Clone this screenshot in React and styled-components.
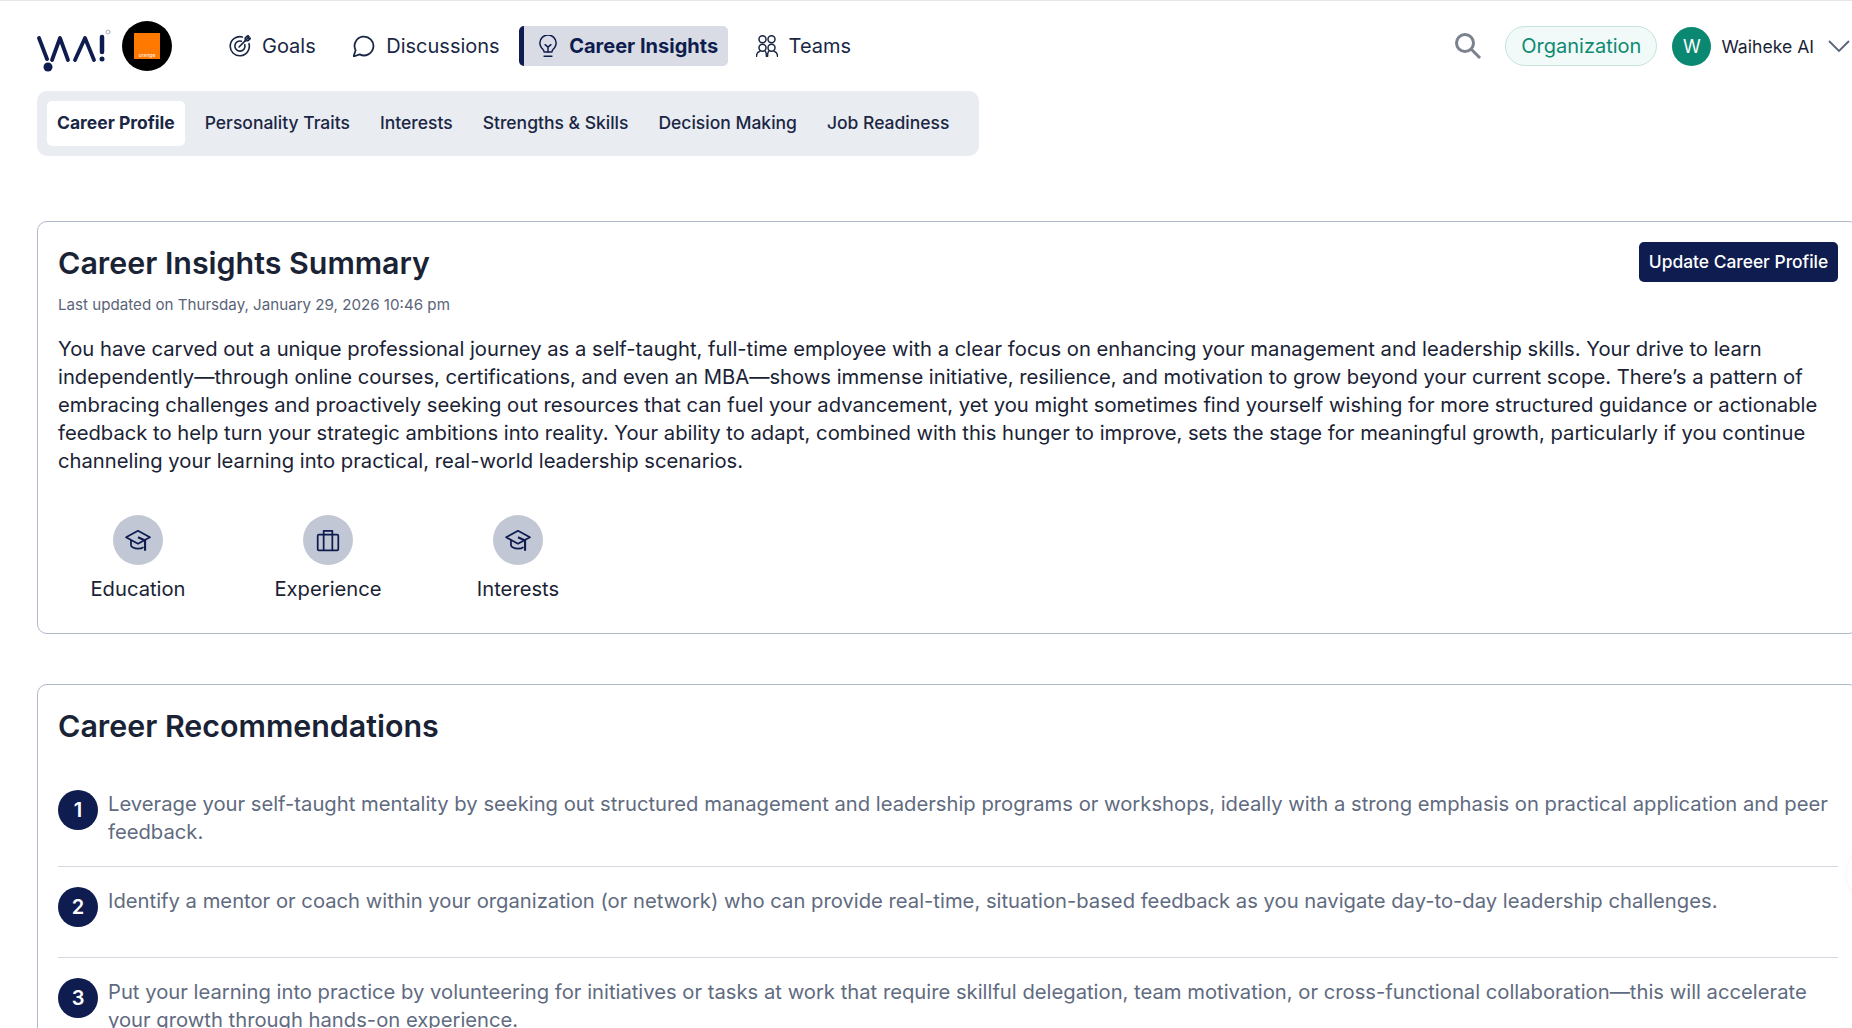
import React from 'react';
import styled, { createGlobalStyle } from 'styled-components';

const navy = '#0e1c4f';

const GlobalStyle = createGlobalStyle`
  html, body {
    margin: 0;
    padding: 0;
    height: 100%;
    overflow: hidden;
    background: #fff;
  }
  body {
    font-family: Inter, "Noto Sans", sans-serif;
    color: #1a2335;
  }
`;

const Page = styled.div`
  width: 1852px;
  height: 1028px;
  overflow: hidden;
  position: relative;
  border-top: 1px solid #e5e7eb;
  box-sizing: border-box;
`;

const Header = styled.header`
  display: flex;
  align-items: center;
  height: 90px;
  padding: 0 2px 0 37px;
  box-sizing: border-box;
`;

const LogoMark = styled.svg`
  width: 78px;
  height: 52px;
  flex-shrink: 0;
`;

const OrangeBadge = styled.div`
  width: 50px;
  height: 50px;
  margin-left: 7px;
  border-radius: 50%;
  background: #000;
  display: flex;
  align-items: center;
  justify-content: center;
  flex-shrink: 0;
`;

const OrangeSquare = styled.div`
  width: 26px;
  height: 26px;
  background: #ff7900;
  display: flex;
  align-items: flex-end;
  justify-content: center;
  font-size: 5px;
  line-height: 8px;
  color: #fff;
`;

const Nav = styled.nav`
  display: flex;
  align-items: center;
  gap: 9.5px;
  margin-left: 39px;
`;

const NavItem = styled.a`
  display: flex;
  align-items: center;
  gap: ${p => (p.$active ? 10 : 11)}px;
  height: 40px;
  padding: 0 10px 0 13px;
  border-left: 5px solid ${p => (p.$active ? navy : 'transparent')};
  border-radius: 5px;
  background: ${p => (p.$active ? '#d9dce4' : 'transparent')};
  color: ${p => (p.$active ? navy : '#1a2744')};
  font-size: 20px;
  font-weight: ${p => (p.$active ? 700 : 400)};
  white-space: nowrap;
  svg {
    width: 22px;
    height: 22px;
    flex-shrink: 0;
  }
`;

const HeaderRight = styled.div`
  display: flex;
  align-items: center;
  margin-left: auto;
`;

const SearchIcon = styled.svg`
  width: 28px;
  height: 28px;
  margin-right: 23px;
`;

const OrgPill = styled.div`
  display: flex;
  align-items: center;
  height: 40px;
  padding: 0 15px;
  box-sizing: border-box;
  border: 1px solid #c4e4dc;
  border-radius: 20px;
  background: #f1faf8;
  color: #0d8a72;
  font-size: 20px;
`;

const Avatar = styled.div`
  width: 39px;
  height: 39px;
  margin-left: 15px;
  border-radius: 50%;
  background: #0b8871;
  color: #fff;
  font-size: 18px;
  display: flex;
  align-items: center;
  justify-content: center;
`;

const UserName = styled.span`
  margin-left: 10px;
  font-size: 17.6px;
  color: #1a2335;
`;

const Chevron = styled.svg`
  width: 22px;
  height: 14px;
  margin-left: 14px;
`;

const TabBar = styled.div`
  display: flex;
  width: max-content;
  gap: 10px;
  margin-left: 37px;
  padding: 10px 20px 10px 10px;
  background: #e9ecf1;
  border-radius: 10px;
`;

const Tab = styled.div`
  height: 45px;
  padding: 0 10px 2px;
  box-sizing: border-box;
  display: flex;
  align-items: center;
  border-radius: 5px;
  background: ${p => (p.$active ? '#fff' : 'transparent')};
  color: #1a2744;
  font-size: 17.5px;
  font-weight: ${p => (p.$active ? 700 : 500)};
  white-space: nowrap;
`;

const Card = styled.section`
  width: 1822px;
  margin: ${p => p.$top}px 0 0 37px;
  padding: 20px 20px 0;
  box-sizing: border-box;
  height: ${p => p.$height}px;
  background: #fff;
  border: 1px solid #b0b9c9;
  border-radius: 10px;
`;

const CardHead = styled.div`
  display: flex;
  justify-content: space-between;
  align-items: flex-start;
`;

const Title = styled.h2`
  margin: 0;
  font-size: 30.4px;
  line-height: 42px;
  font-weight: 600;
  color: #1a2335;
`;

const UpdateButton = styled.button`
  height: 40px;
  width: 199px;
  border: none;
  border-radius: 5px;
  background: ${navy};
  color: #fff;
  font-family: inherit;
  font-size: 17.4px;
  font-weight: 500;
  white-space: nowrap;
  padding: 0 0 1px;
`;

const Updated = styled.div`
  margin-top: 10px;
  font-size: 15.15px;
  line-height: 22px;
  color: #5a6478;
`;

const Summary = styled.p`
  margin: 19px 0 0;
  font-size: 20.23px;
  line-height: 28px;
  color: #1a2335;
`;

const Highlights = styled.div`
  display: flex;
  margin: 40px 0 0 -15px;
`;

const Highlight = styled.div`
  width: 190px;
  display: flex;
  flex-direction: column;
  align-items: center;
  font-size: 20.2px;
  line-height: 28px;
  color: #1a2335;
`;

const HighlightIcon = styled.div`
  width: 50px;
  height: 50px;
  margin-bottom: 10px;
  border-radius: 50%;
  background: #c1c7d4;
  color: ${navy};
  display: flex;
  align-items: center;
  justify-content: center;
  svg {
    width: 26px;
    height: 26px;
  }
`;

const RecList = styled.div`
  margin-top: 43px;
`;

const RecItem = styled.div`
  display: flex;
  padding: ${p => (p.$first ? 0 : 20)}px 0 20px;
  border-bottom: ${p => (p.$last ? 'none' : '1px solid #d5d8e0')};
`;

const RecRow = styled.div`
  display: flex;
  gap: 10px;
  min-height: 50px;
`;

const RecNumber = styled.div`
  width: 40px;
  height: 40px;
  flex-shrink: 0;
  border-radius: 50%;
  background: ${navy};
  color: #fff;
  font-size: 20px;
  font-weight: 600;
  display: flex;
  align-items: center;
  justify-content: center;
`;

const RecText = styled.div`
  font-size: 20.23px;
  line-height: 28px;
  color: #5f6b80;
`;

const EdgeButton = styled.div`
  position: absolute;
  left: 1847px;
  top: 843px;
  width: 60px;
  height: 60px;
  border-radius: 50%;
  background: #fff;
  box-shadow: 0 0 4px rgba(30, 40, 70, 0.07);
`;

const iconProps = {
  viewBox: '0 0 24 24',
  fill: 'none',
  stroke: 'currentColor',
  strokeWidth: 1.7,
  strokeLinecap: 'round',
  strokeLinejoin: 'round',
};

const GoalIcon = () => (
  <svg {...iconProps} viewBox="0.5 0.5 23 23">
    <path d="M21.4 9.6A10 10 0 1 1 14.4 2.6" />
    <path d="M17 10.6A5.300 5.300 0 1 1 13.400 7" />
    <path d="M11 13 21.500 2.500" />
    <path d="M17.500 3.500v3h3l2.500-2.500h-2.500V1z" />
  </svg>
);

const BubbleIcon = () => (
  <svg {...iconProps} viewBox="1.5 1.5 21 21">
    <path d="M7.900 20A9 9 0 1 0 4 16.100L2 22Z" />
  </svg>
);

const BulbIcon = () => (
  <svg {...iconProps} viewBox="1 0.600 22 22.500" strokeWidth={1.5}>
    <path d="M8 18c0-2-1.500-3-2.500-4a8.300 8.300 0 1 1 13 0c-1 1-2.500 2-2.500 4z" />
    <path d="M9 10.500l3 2.500 3-2.500M12 13v5" />
    <path d="M8 22.300h8" />
  </svg>
);

const TeamIcon = () => (
  <svg {...iconProps} viewBox="1 1.200 22 22" strokeWidth={1.5}>
    <circle cx="7.500" cy="5.500" r="3.500" />
    <circle cx="16.500" cy="5.500" r="3.500" />
    <circle cx="7.500" cy="14" r="3.500" />
    <circle cx="16.500" cy="14" r="3.500" />
    <path d="M1.500 22.500c0-2.500 1.300-4.300 3.300-5M10.200 17.500c1 .6 1.200 2.700 1.200 5M22.500 22.500c0-2.500-1.300-4.300-3.300-5M13.800 17.500c-1 .6-1.200 2.700-1.200 5" />
  </svg>
);

const CapIcon = () => (
  <svg {...iconProps} strokeWidth={1.6} strokeLinecap="butt">
    <path d="M12 3.500 23 9.500 12 15.500 1 9.500z" />
    <path d="M5.500 12v4.500c0 2 3 3.500 6.500 3.500 2 0 4-.5 5-1.500" />
    <path d="M12 9.500 18.500 12.500V22" strokeWidth={2} />
  </svg>
);

const CaseIcon = () => (
  <svg {...iconProps} strokeWidth={1.6} strokeLinecap="butt">
    <rect x="2.500" y="7" width="19" height="14.500" rx="1" />
    <path d="M8 7v14.500M16 7v14.500" />
    <path d="M8 7V3.500h8V7" />
  </svg>
);

const Logo = () => (
  <LogoMark viewBox="0 0 78 52" fill="none" stroke={navy} strokeWidth="3.800" strokeLinecap="round" strokeLinejoin="round">
    <path d="M2 18 10 39" />
    <path d="M15 40 23 18 31 40" />
    <path d="M38 40 48 18 57 40" />
    <path d="M65 17 65 32" strokeWidth="4.500" />
    <circle cx="65" cy="39" r="2.500" fill={navy} stroke="none" />
    <circle cx="11" cy="47" r="4.500" fill={navy} stroke="none" />
    <circle cx="71" cy="12" r="2" stroke="#a9b0bd" strokeWidth="1" />
  </LogoMark>
);

const tabs = ['Career Profile', 'Personality Traits', 'Interests', 'Strengths & Skills', 'Decision Making', 'Job Readiness'];

const recommendations = [
  'Leverage your self-taught mentality by seeking out structured management and leadership programs or workshops, ideally with a strong emphasis on practical application and peer feedback.',
  'Identify a mentor or coach within your organization (or network) who can provide real-time, situation-based feedback as you navigate day-to-day leadership challenges.',
  'Put your learning into practice by volunteering for initiatives or tasks at work that require skillful delegation, team motivation, or cross-functional collaboration—this will accelerate your growth through hands-on experience.',
];

export default function App() {
  return (
    <Page>
      <GlobalStyle />
      <Header>
        <Logo />
        <OrangeBadge>
          <OrangeSquare>orange</OrangeSquare>
        </OrangeBadge>
        <Nav>
          <NavItem><GoalIcon />Goals</NavItem>
          <NavItem><BubbleIcon />Discussions</NavItem>
          <NavItem $active><BulbIcon />Career Insights</NavItem>
          <NavItem><TeamIcon />Teams</NavItem>
        </Nav>
        <HeaderRight>
          <SearchIcon viewBox="0 0 28 28" fill="none" stroke="#7b818f" strokeWidth="3">
            <circle cx="11" cy="11" r="8.500" />
            <path d="M17 17l9 9" />
          </SearchIcon>
          <OrgPill>Organization</OrgPill>
          <Avatar>W</Avatar>
          <UserName>Waiheke AI</UserName>
          <Chevron viewBox="0 0 22 14" fill="none" stroke="#5a6478" strokeWidth="1.800">
            <path d="M1 2l10 10L21 2" />
          </Chevron>
        </HeaderRight>
      </Header>
      <TabBar>
        {tabs.map((tab, i) => (
          <Tab key={tab} $active={i === 0}>{tab}</Tab>
        ))}
      </TabBar>
      <Card $top={65} $height={413}>
        <CardHead>
          <Title>Career Insights Summary</Title>
          <UpdateButton>Update Career Profile</UpdateButton>
        </CardHead>
        <Updated>Last updated on Thursday, January 29, 2026 10:46 pm</Updated>
        <Summary>
          You have carved out a unique professional journey as a self-taught, full-time employee with a clear focus on enhancing your management and leadership skills. Your drive to learn independently—through online courses, certifications, and even an MBA—shows immense initiative, resilience, and motivation to grow beyond your current scope. There’s a pattern of embracing challenges and proactively seeking out resources that can fuel your advancement, yet you might sometimes find yourself wishing for more structured guidance or actionable feedback to help turn your strategic ambitions into reality. Your ability to adapt, combined with this hunger to improve, sets the stage for meaningful growth, particularly if you continue channeling your learning into practical, real-world leadership scenarios.
        </Summary>
        <Highlights>
          <Highlight><HighlightIcon><CapIcon /></HighlightIcon>Education</Highlight>
          <Highlight><HighlightIcon><CaseIcon /></HighlightIcon>Experience</Highlight>
          <Highlight><HighlightIcon><CapIcon /></HighlightIcon>Interests</Highlight>
        </Highlights>
      </Card>
      <Card $top={50} $height={400}>
        <Title>Career Recommendations</Title>
        <RecList>
          {recommendations.map((text, i) => (
            <RecItem key={i} $first={i === 0} $last={i === recommendations.length - 1}>
              <RecRow>
                <RecNumber>{i + 1}</RecNumber>
                <RecText>{text}</RecText>
              </RecRow>
            </RecItem>
          ))}
        </RecList>
      </Card>
      <EdgeButton />
    </Page>
  );
}
